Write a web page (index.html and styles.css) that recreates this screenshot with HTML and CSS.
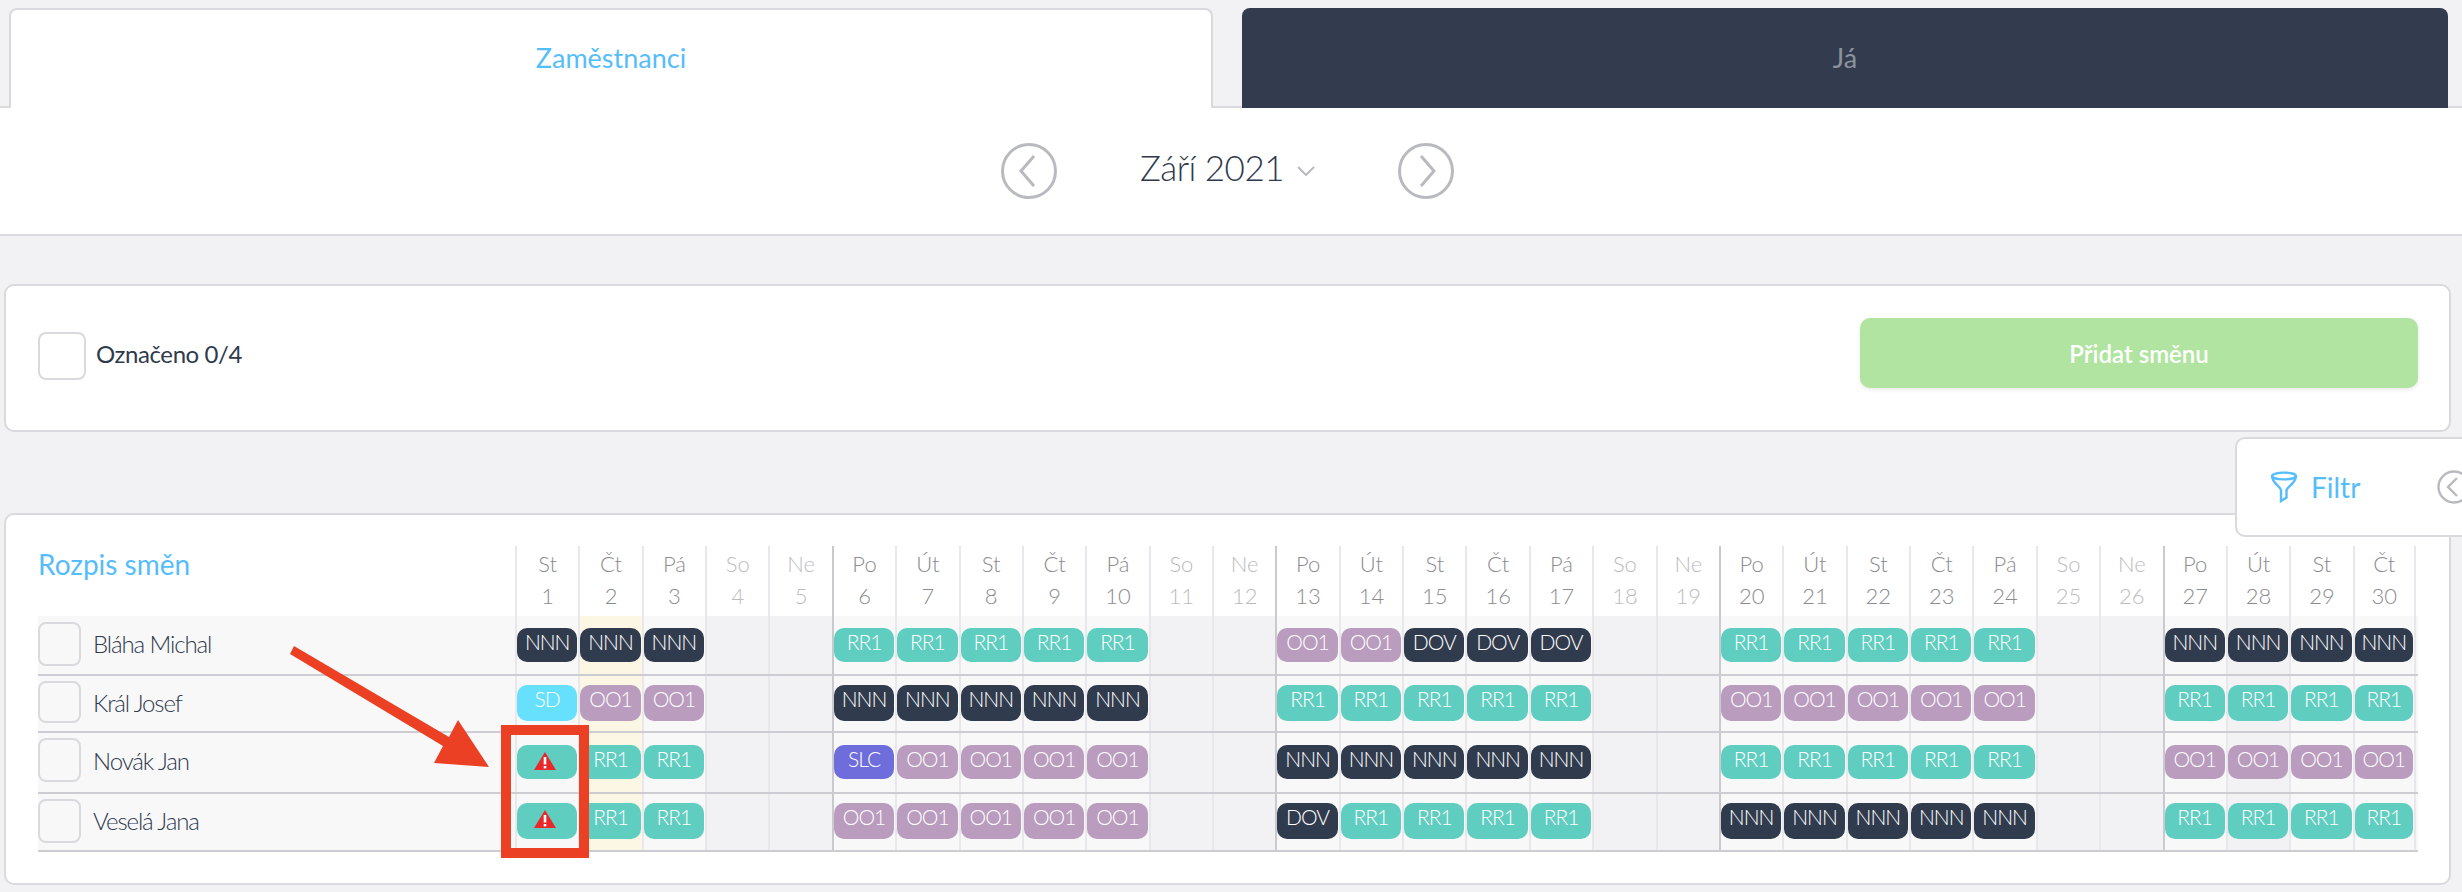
FILE: index.html
```html
<!DOCTYPE html>
<html lang="cs">
<head>
    <meta charset="UTF-8">
    <meta name="viewport" content="width=device-width, initial-scale=1.0">
    <title>Rozpis směn</title>
    <link rel="stylesheet" href="styles.css">
</head>
<body>

<div class="page">
    <!-- Tabs -->
    <div class="tabs">
        <div class="tab tab-active">Zaměstnanci</div>
        <div class="tab tab-dark">Já</div>
    </div>

    <!-- Month switcher -->
    <div class="month-bar">
        <svg class="round-btn" viewBox="0 0 56 56"><circle cx="28" cy="28" r="26.5"/><path d="M33 13 L20 28 L33 43"/></svg>
        <div class="month">Září 2021 <svg class="caret" viewBox="0 0 18 10"><path d="M1 1 L9 9 L17 1"/></svg></div>
        <svg class="round-btn" viewBox="0 0 56 56"><circle cx="28" cy="28" r="26.5"/><path d="M23 13 L36 28 L23 43"/></svg>
    </div>

    <div class="card toolbar">
        <div class="check check-big"></div>
        <div class="marked">Označeno 0/4</div>
        <div class="add-btn">Přidat směnu</div>
    </div>

    <div class="card schedule">
        <!-- Header -->
        <div class="row head">
            <div class="title">Rozpis směn</div>
            <div class="day">St<br>1</div><div class="day">Čt<br>2</div><div class="day">Pá<br>3</div><div class="day we">So<br>4</div><div class="day we">Ne<br>5</div>
            <div class="day wk">Po<br>6</div><div class="day">Út<br>7</div><div class="day">St<br>8</div><div class="day">Čt<br>9</div><div class="day">Pá<br>10</div><div class="day we">So<br>11</div><div class="day we">Ne<br>12</div>
            <div class="day wk">Po<br>13</div><div class="day">Út<br>14</div><div class="day">St<br>15</div><div class="day">Čt<br>16</div><div class="day">Pá<br>17</div><div class="day we">So<br>18</div><div class="day we">Ne<br>19</div>
            <div class="day wk">Po<br>20</div><div class="day">Út<br>21</div><div class="day">St<br>22</div><div class="day">Čt<br>23</div><div class="day">Pá<br>24</div><div class="day we">So<br>25</div><div class="day we">Ne<br>26</div>
            <div class="day wk">Po<br>27</div><div class="day">Út<br>28</div><div class="day">St<br>29</div><div class="day last">Čt<br>30</div>
        </div>

        <!-- Bláha Michal -->
        <div class="row r1">
            <div class="name"><div class="check"></div>Bláha Michal</div>
            <div class="cell"><div class="chip nnn">NNN</div></div><div class="cell today"><div class="chip nnn">NNN</div></div><div class="cell"><div class="chip nnn">NNN</div></div><div class="cell off"></div><div class="cell off"></div>
            <div class="cell wk"><div class="chip rr">RR1</div></div><div class="cell"><div class="chip rr">RR1</div></div><div class="cell"><div class="chip rr">RR1</div></div><div class="cell"><div class="chip rr">RR1</div></div><div class="cell"><div class="chip rr">RR1</div></div><div class="cell off"></div><div class="cell off"></div>
            <div class="cell wk"><div class="chip oo">OO1</div></div><div class="cell"><div class="chip oo">OO1</div></div><div class="cell"><div class="chip nnn">DOV</div></div><div class="cell"><div class="chip nnn">DOV</div></div><div class="cell"><div class="chip nnn">DOV</div></div><div class="cell off"></div><div class="cell off"></div>
            <div class="cell wk"><div class="chip rr">RR1</div></div><div class="cell"><div class="chip rr">RR1</div></div><div class="cell"><div class="chip rr">RR1</div></div><div class="cell"><div class="chip rr">RR1</div></div><div class="cell"><div class="chip rr">RR1</div></div><div class="cell off"></div><div class="cell off"></div>
            <div class="cell wk"><div class="chip nnn">NNN</div></div><div class="cell shade"><div class="chip nnn">NNN</div></div><div class="cell"><div class="chip nnn">NNN</div></div><div class="cell last"><div class="chip nnn">NNN</div></div>
        </div>

        <!-- Král Josef -->
        <div class="row r2">
            <div class="name"><div class="check"></div>Král Josef</div>
            <div class="cell"><div class="chip sd">SD</div></div><div class="cell today"><div class="chip oo">OO1</div></div><div class="cell"><div class="chip oo">OO1</div></div><div class="cell off"></div><div class="cell off"></div>
            <div class="cell wk"><div class="chip nnn">NNN</div></div><div class="cell"><div class="chip nnn">NNN</div></div><div class="cell"><div class="chip nnn">NNN</div></div><div class="cell"><div class="chip nnn">NNN</div></div><div class="cell"><div class="chip nnn">NNN</div></div><div class="cell off"></div><div class="cell off"></div>
            <div class="cell wk"><div class="chip rr">RR1</div></div><div class="cell"><div class="chip rr">RR1</div></div><div class="cell"><div class="chip rr">RR1</div></div><div class="cell"><div class="chip rr">RR1</div></div><div class="cell"><div class="chip rr">RR1</div></div><div class="cell off"></div><div class="cell off"></div>
            <div class="cell wk"><div class="chip oo">OO1</div></div><div class="cell"><div class="chip oo">OO1</div></div><div class="cell"><div class="chip oo">OO1</div></div><div class="cell"><div class="chip oo">OO1</div></div><div class="cell"><div class="chip oo">OO1</div></div><div class="cell off"></div><div class="cell off"></div>
            <div class="cell wk"><div class="chip rr">RR1</div></div><div class="cell shade"><div class="chip rr">RR1</div></div><div class="cell"><div class="chip rr">RR1</div></div><div class="cell last"><div class="chip rr">RR1</div></div>
        </div>

        <!-- Novák Jan -->
        <div class="row r3">
            <div class="name"><div class="check"></div>Novák Jan</div>
            <div class="cell"><div class="chip rr"><svg class="warn" viewBox="0 0 22 18"><path d="M11 0 L22 18 L0 18 Z"/><rect x="9.7" y="5" width="2.6" height="7.5"/><rect x="9.7" y="14" width="2.6" height="2.4"/></svg></div></div><div class="cell today"><div class="chip rr">RR1</div></div><div class="cell"><div class="chip rr">RR1</div></div><div class="cell off"></div><div class="cell off"></div>
            <div class="cell wk"><div class="chip slc">SLC</div></div><div class="cell"><div class="chip oo">OO1</div></div><div class="cell"><div class="chip oo">OO1</div></div><div class="cell"><div class="chip oo">OO1</div></div><div class="cell"><div class="chip oo">OO1</div></div><div class="cell off"></div><div class="cell off"></div>
            <div class="cell wk"><div class="chip nnn">NNN</div></div><div class="cell"><div class="chip nnn">NNN</div></div><div class="cell"><div class="chip nnn">NNN</div></div><div class="cell"><div class="chip nnn">NNN</div></div><div class="cell"><div class="chip nnn">NNN</div></div><div class="cell off"></div><div class="cell off"></div>
            <div class="cell wk"><div class="chip rr">RR1</div></div><div class="cell"><div class="chip rr">RR1</div></div><div class="cell"><div class="chip rr">RR1</div></div><div class="cell"><div class="chip rr">RR1</div></div><div class="cell"><div class="chip rr">RR1</div></div><div class="cell off"></div><div class="cell off"></div>
            <div class="cell wk"><div class="chip oo">OO1</div></div><div class="cell shade"><div class="chip oo">OO1</div></div><div class="cell"><div class="chip oo">OO1</div></div><div class="cell last"><div class="chip oo">OO1</div></div>
        </div>

        <!-- Veselá Jana -->
        <div class="row r4">
            <div class="name"><div class="check"></div>Veselá Jana</div>
            <div class="cell"><div class="chip rr"><svg class="warn" viewBox="0 0 22 18"><path d="M11 0 L22 18 L0 18 Z"/><rect x="9.7" y="5" width="2.6" height="7.5"/><rect x="9.7" y="14" width="2.6" height="2.4"/></svg></div></div><div class="cell today"><div class="chip rr">RR1</div></div><div class="cell"><div class="chip rr">RR1</div></div><div class="cell off"></div><div class="cell off"></div>
            <div class="cell wk"><div class="chip oo">OO1</div></div><div class="cell"><div class="chip oo">OO1</div></div><div class="cell"><div class="chip oo">OO1</div></div><div class="cell"><div class="chip oo">OO1</div></div><div class="cell"><div class="chip oo">OO1</div></div><div class="cell off"></div><div class="cell off"></div>
            <div class="cell wk"><div class="chip nnn">DOV</div></div><div class="cell"><div class="chip rr">RR1</div></div><div class="cell"><div class="chip rr">RR1</div></div><div class="cell"><div class="chip rr">RR1</div></div><div class="cell"><div class="chip rr">RR1</div></div><div class="cell off"></div><div class="cell off"></div>
            <div class="cell wk"><div class="chip nnn">NNN</div></div><div class="cell"><div class="chip nnn">NNN</div></div><div class="cell"><div class="chip nnn">NNN</div></div><div class="cell"><div class="chip nnn">NNN</div></div><div class="cell"><div class="chip nnn">NNN</div></div><div class="cell off"></div><div class="cell off"></div>
            <div class="cell wk"><div class="chip rr">RR1</div></div><div class="cell shade"><div class="chip rr">RR1</div></div><div class="cell"><div class="chip rr">RR1</div></div><div class="cell last"><div class="chip rr">RR1</div></div>
        </div>
    </div>

    <!-- Filter drawer, sticks out over the right edge -->
    <div class="filter">
        <svg class="funnel" viewBox="0 0 28 32"><ellipse cx="14" cy="5" rx="12" ry="3.4"/><path d="M2 5 C2 12 10 15 11 19 L11 30 L16.5 26.5 L16.5 19 C18 15 26 12 26 5"/></svg>
        <span class="filter-label">Filtr</span>
        <svg class="filter-close" viewBox="0 0 34 34"><circle cx="17" cy="17" r="15.5"/><path d="M20 8 L11 17 L20 26"/></svg>
    </div>

    <!-- Red annotation drawn over the screenshot -->
    <svg class="note" viewBox="0 0 2462 892">
        <rect x="506" y="730" width="78" height="123"/>
        <path d="M294 646 L449 737 L458 720 L489 767 L434 763 L443 746 L290 654 Z" class="note-arrow"/>
    </svg>
</div>

</body>
</html>
```

FILE: styles.css
```css
body {
    font-family: "Lato", "Noto Sans", sans-serif;
    background-color: #f2f2f5;
    color: #2f3a4d;
    margin: 0;
    overflow: hidden;
}

.page {
    position: relative;
    width: 2462px;
    height: 892px;
    overflow: hidden;
}

/* Tabs */
.tabs {
    display: flex;
    gap: 29px;
    padding: 8px 0 0 9px;
    position: relative;
    z-index: 1;
}

.tab {
    height: 100px;
    box-sizing: border-box;
    display: flex;
    justify-content: center;
    padding-top: 33px;
    font-size: 27px;
    line-height: 34px;
    border-radius: 8px 8px 0 0;
}

.tab-active {
    width: 1204px;
    background-color: #fff;
    border: 2px solid #dadade;
    border-bottom: 0;
    padding-top: 31px;
    color: #56bdfb;
}

.tab-dark {
    width: 1206px;
    background-color: #323c4e;
    color: #8d939d;
}

/* Month switcher */
.month-bar {
    height: 126px;
    margin-top: -2px;
    background-color: #fff;
    border-top: 2px solid #dadade;
    border-bottom: 2px solid #dadade;
    display: flex;
    align-items: center;
    justify-content: center;
    gap: 83px;
    padding-right: 7px;
}

.round-btn {
    width: 56px;
    height: 56px;
    fill: none;
    stroke: #b9babf;
    stroke-width: 3;
}

.month {
    font-size: 35px;
    font-weight: 300;
    letter-spacing: -0.5px;
    display: flex;
    align-items: center;
    gap: 13px;
    margin-top: -9px;
}

.caret {
    width: 18px;
    height: 10px;
    margin-top: 8px;
    fill: none;
    stroke: #b9babf;
    stroke-width: 2;
}

/* Cards */
.card {
    background-color: #fff;
    border: 2px solid #dadade;
    border-radius: 10px;
    box-sizing: border-box;
    margin-left: 4px;
    width: 2447px;
}

.toolbar {
    height: 148px;
    margin-top: 48px;
    display: flex;
    align-items: center;
    padding: 0 31px 10px 32px;
}

.check {
    width: 43px;
    height: 44px;
    box-sizing: border-box;
    border: 2px solid #dadade;
    border-radius: 8px;
    flex-shrink: 0;
}

.check-big {
    width: 48px;
    height: 48px;
    margin-top: 6px;
}

.marked {
    margin-left: 10px;
    font-size: 24px;
    letter-spacing: -0.4px;
    flex: 1;
}

.add-btn {
    width: 558px;
    height: 70px;
    background-color: #b0e4a0;
    border-radius: 10px;
    box-shadow: 0 2px 4px rgba(0, 0, 0, 0.08);
    color: #fff;
    font-size: 24px;
    font-weight: 600;
    display: flex;
    align-items: center;
    justify-content: center;
}

/* Schedule table */
.schedule {
    height: 372px;
    margin-top: 81px;
    padding: 31px 0 0 32px;
}

.row {
    display: grid;
    grid-template-columns: 477px repeat(30, minmax(0, 1fr));
    width: 2380px;
    box-sizing: border-box;
    padding-right: 2px;
    background-color: #f8f8f9;
    border-bottom: 2px solid #ccccd2;
}

.row.head {
    height: 70px;
    background-color: #fff;
    border-bottom: 0;
}

.title {
    font-size: 28px;
    color: #56bdfb;
    line-height: 36px;
}

.day {
    border-left: 2px solid #e8e8ec;
    color: #8b8b90;
    font-size: 22px;
    font-weight: 300;
    line-height: 32px;
    text-align: center;
    padding-top: 2px;
}

.day.we {
    color: #bcbcc0;
}

.wk {
    border-left-color: #c9c9ce;
}

.last {
    border-right: 2px solid #e8e8ec;
}

.r1 { height: 60px; }
.r2 { height: 57px; }
.r3 { height: 61px; }
.r4 { height: 58px; }

.name {
    display: flex;
    align-items: flex-start;
    gap: 12px;
    font-size: 24px;
    font-weight: 300;
    letter-spacing: -1.1px;
    line-height: 44px;
}

.r1 .name { padding-top: 6px; }
.r2 .name { padding-top: 5px; }
.r3 .name { padding-top: 5px; line-height: 46px; }
.r4 .name { padding-top: 5px; }

.r2 .check { height: 42px; }

.cell {
    border-left: 2px solid #e8e8ec;
    padding-right: 1px;
    min-width: 0;
}

.cell.wk {
    border-left-color: #c9c9ce;
}

.cell.off,
.cell.shade {
    background-color: #f2f2f5;
}

.cell.today {
    background-color: #fbf7e4;
}

.chip {
    border-radius: 10px;
    color: #fff;
    font-size: 21px;
    font-weight: 300;
    letter-spacing: -1px;
    line-height: 28px;
    text-align: center;
}

.r1 .chip, .r3 .chip { height: 34px; margin-top: 12px; }
.r2 .chip, .r4 .chip { height: 36px; margin-top: 9px; }

.nnn { background-color: #313b4e; }
.rr { background-color: #5fcdbf; }
.oo { background-color: #b99cbe; }
.sd { background-color: #66e0fc; }
.slc { background-color: #6f6ddb; }

.warn {
    display: block;
    width: 22px;
    height: 18px;
    margin: 0 auto;
    padding: 7px 4px 0 0;
    fill: #e8282a;
}

.warn rect {
    fill: #fff;
}

/* Filter drawer */
.filter {
    position: absolute;
    top: 437px;
    left: 2235px;
    width: 240px;
    height: 100px;
    box-sizing: border-box;
    background-color: #fff;
    border: 2px solid #dadade;
    border-radius: 10px;
    display: flex;
    align-items: center;
    padding-left: 33px;
    z-index: 2;
}

.funnel {
    width: 28px;
    height: 32px;
    fill: none;
    stroke: #56bdfb;
    stroke-width: 2.4;
}

.filter-label {
    margin-left: 13px;
    font-size: 28px;
    color: #56bdfb;
}

.filter-close {
    width: 34px;
    height: 34px;
    margin-left: 77px;
    fill: none;
    stroke: #b9babf;
    stroke-width: 2.4;
}

/* Annotation */
.note {
    position: absolute;
    top: 0;
    left: 0;
    width: 2462px;
    height: 892px;
    z-index: 3;
    fill: none;
    stroke: #ec4024;
    stroke-width: 10;
}

.note .note-arrow {
    fill: #ec4024;
    stroke: none;
}
```
